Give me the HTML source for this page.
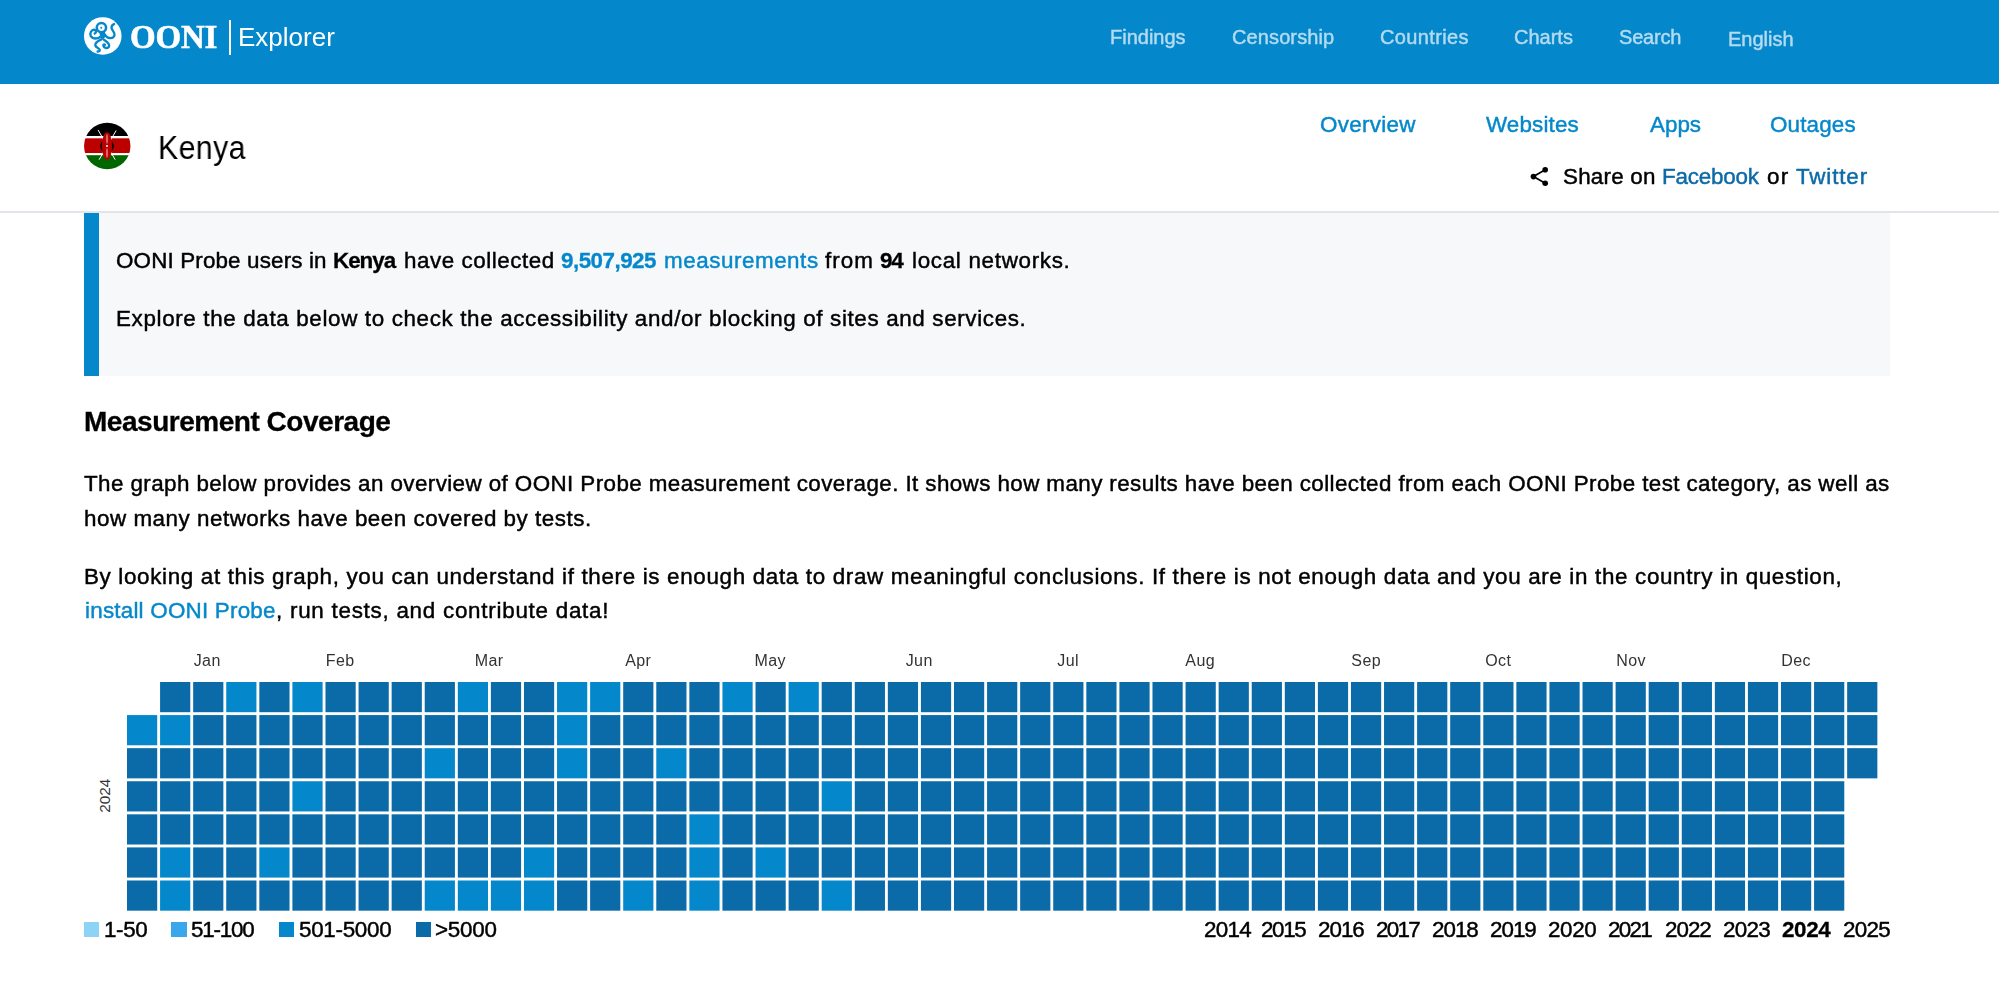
<!DOCTYPE html>
<html><head><meta charset="utf-8"><title>Kenya - OONI Explorer</title>
<style>
html,body{margin:0;padding:0;background:#fff;width:1999px;height:995px;overflow:hidden;position:relative;font-family:"Liberation Sans", sans-serif}
.t{position:absolute;white-space:pre;will-change:transform}
.lk{color:#0588cb}
.lk2{color:#0b6ba8}
.ml{position:absolute;top:653px;width:100px;text-align:center;font-size:16px;line-height:16px;letter-spacing:0.4px;text-indent:0.4px;color:#333;will-change:transform}
</style></head><body>
<div style="position:absolute;left:0;top:0;width:1999px;height:84px;background:#0588cb"></div>
<svg style="position:absolute;left:82px;top:15px" width="42" height="42" viewBox="0 0 995 995">
 <circle cx="492" cy="497" r="445" fill="#fff"/>
 <g fill="none" stroke="#0588cb" stroke-width="56" stroke-linecap="round" stroke-linejoin="round">
  <circle cx="460" cy="298" r="110" stroke-width="60"/>
  <path d="M440 510 C 390 570, 260 580, 210 500 C 170 430, 230 345, 290 350 C 340 355, 350 420, 300 440"/>
  <path d="M545 470 C 600 560, 740 580, 770 480 C 790 410, 700 360, 700 300 C 700 250, 730 225, 760 215"/>
  <path d="M465 575 C 390 610, 300 650, 315 720 C 330 780, 410 770, 420 830 C 425 860, 395 870, 370 865"/>
  <path d="M520 585 C 590 630, 670 690, 640 750 C 610 800, 520 790, 505 730 C 500 700, 530 690, 545 705"/>
 </g>
 <path d="M395 370 Q 460 420 530 370 L 560 470 Q 550 550 490 580 Q 430 550 425 480 Z" fill="#0588cb"/>
 <circle cx="456" cy="304" r="24" fill="#0588cb"/>
</svg>
<div style="position:absolute;left:228.6px;top:20px;width:2.6px;height:34.8px;background:#fff"></div>
<svg style="position:absolute;left:82px;top:121px" width="50" height="50" viewBox="0 0 50 50">
 <defs><clipPath id="fc"><circle cx="25.25" cy="25" r="23.2"/></clipPath></defs>
 <g clip-path="url(#fc)">
  <rect x="0" y="0" width="50" height="15.1" fill="#000"/>
  <rect x="0" y="15.1" width="50" height="2.2" fill="#fff"/>
  <rect x="0" y="17.3" width="50" height="14.9" fill="#bb0000"/>
  <rect x="0" y="32.2" width="50" height="2" fill="#fff"/>
  <rect x="0" y="34.2" width="50" height="16" fill="#006600"/>
  <line x1="16.1" y1="9" x2="33.2" y2="38.7" stroke="#fff" stroke-width="1"/>
  <line x1="34.2" y1="9.5" x2="17.1" y2="38.7" stroke="#fff" stroke-width="1"/>
  <ellipse cx="25" cy="25" rx="6.8" ry="7.2" fill="#000"/>
  <ellipse cx="25" cy="25" rx="5.1" ry="13.8" fill="#bb0000"/>
  <ellipse cx="25" cy="18" rx="1.1" ry="4.8" fill="#fff" opacity=".4"/>
  <ellipse cx="25" cy="32" rx="1.1" ry="4.8" fill="#fff" opacity=".4"/>
  <circle cx="25" cy="25" r="1" fill="#fff"/>
 </g>
</svg>
<svg style="position:absolute;left:1526px;top:163px" width="26" height="26" viewBox="0 0 26 26">
 <g stroke="#000" stroke-width="1.7"><line x1="19.2" y1="6.7" x2="7.45" y2="13.6"/><line x1="7.45" y1="13.6" x2="19.2" y2="20.25"/></g>
 <g fill="#000"><circle cx="19.2" cy="6.7" r="2.8"/><circle cx="7.45" cy="13.6" r="2.8"/><circle cx="19.2" cy="20.25" r="2.8"/></g>
</svg>
<div style="position:absolute;left:0;top:211px;width:1999px;height:2px;background:#e1e4e9"></div>
<div style="position:absolute;left:84px;top:213px;width:1806px;height:163px;background:#f7f8fa"></div>
<div style="position:absolute;left:84px;top:213px;width:14.6px;height:163px;background:#0588cb"></div>
<div id="ooni" class="t" style="left:130.30px;top:21.00px;font-size:33px;line-height:33px;font-weight:700;color:#fff;letter-spacing:-0.200px;font-family:'Liberation Serif', serif;-webkit-text-stroke:0.5px #fff;">OONI</div><div id="explorer" class="t" style="left:237.80px;top:24.00px;font-size:26px;line-height:26px;font-weight:400;color:#fff;letter-spacing:-0.000px;font-family:'Liberation Sans', sans-serif;">Explorer</div><div id="n1" class="t" style="left:1110.30px;top:27.00px;font-size:20px;line-height:20px;font-weight:400;color:#b4dbef;letter-spacing:-0.000px;font-family:'Liberation Sans', sans-serif;-webkit-text-stroke:0.45px #b4dbef;">Findings</div><div id="n2" class="t" style="left:1231.60px;top:27.00px;font-size:20px;line-height:20px;font-weight:400;color:#b4dbef;letter-spacing:0.111px;font-family:'Liberation Sans', sans-serif;-webkit-text-stroke:0.45px #b4dbef;">Censorship</div><div id="n3" class="t" style="left:1379.80px;top:27.00px;font-size:20px;line-height:20px;font-weight:400;color:#b4dbef;letter-spacing:0.375px;font-family:'Liberation Sans', sans-serif;-webkit-text-stroke:0.45px #b4dbef;">Countries</div><div id="n4" class="t" style="left:1514.40px;top:27.00px;font-size:20px;line-height:20px;font-weight:400;color:#b4dbef;letter-spacing:-0.000px;font-family:'Liberation Sans', sans-serif;-webkit-text-stroke:0.45px #b4dbef;">Charts</div><div id="n5" class="t" style="left:1618.50px;top:27.00px;font-size:20px;line-height:20px;font-weight:400;color:#b4dbef;letter-spacing:-0.200px;font-family:'Liberation Sans', sans-serif;-webkit-text-stroke:0.45px #b4dbef;">Search</div><div id="n6" class="t" style="left:1727.70px;top:29.00px;font-size:20px;line-height:20px;font-weight:400;color:#b4dbef;letter-spacing:0.000px;font-family:'Liberation Sans', sans-serif;-webkit-text-stroke:0.45px #b4dbef;">English</div><div id="kenya" class="t" style="left:157.60px;top:131.00px;font-size:33.6px;line-height:33.6px;font-weight:400;color:#000;letter-spacing:0.500px;font-family:'Liberation Sans', sans-serif;transform:scaleX(0.9);transform-origin:0 0;">Kenya</div><div id="t1" class="t" style="left:1320.30px;top:114.00px;font-size:22.4px;line-height:22.4px;font-weight:400;color:#0588cb;letter-spacing:0.286px;font-family:'Liberation Sans', sans-serif;-webkit-text-stroke:0.45px #0588cb;">Overview</div><div id="t2" class="t" style="left:1486.30px;top:114.00px;font-size:22.4px;line-height:22.4px;font-weight:400;color:#0588cb;letter-spacing:0.143px;font-family:'Liberation Sans', sans-serif;-webkit-text-stroke:0.45px #0588cb;">Websites</div><div id="t3" class="t" style="left:1650.00px;top:114.00px;font-size:22.4px;line-height:22.4px;font-weight:400;color:#0588cb;letter-spacing:0.000px;font-family:'Liberation Sans', sans-serif;-webkit-text-stroke:0.45px #0588cb;">Apps</div><div id="t4" class="t" style="left:1770.20px;top:114.00px;font-size:22.4px;line-height:22.4px;font-weight:400;color:#0588cb;letter-spacing:0.167px;font-family:'Liberation Sans', sans-serif;-webkit-text-stroke:0.45px #0588cb;">Outages</div><div id="sh1" class="t" style="left:1562.60px;top:166.00px;font-size:22.4px;line-height:22.4px;font-weight:400;color:#000;letter-spacing:0.214px;font-family:'Liberation Sans', sans-serif;-webkit-text-stroke:0.45px #000;">Share on</div><div id="sh2" class="t" style="left:1662.40px;top:166.00px;font-size:22.4px;line-height:22.4px;font-weight:400;color:#0b6ba8;letter-spacing:-0.200px;font-family:'Liberation Sans', sans-serif;-webkit-text-stroke:0.45px #0b6ba8;">Facebook</div><div id="sh3" class="t" style="left:1767.00px;top:166.00px;font-size:22.4px;line-height:22.4px;font-weight:400;color:#000;letter-spacing:1.400px;font-family:'Liberation Sans', sans-serif;-webkit-text-stroke:0.45px #000;">or</div><div id="sh4" class="t" style="left:1795.50px;top:166.00px;font-size:22.4px;line-height:22.4px;font-weight:400;color:#0b6ba8;letter-spacing:0.867px;font-family:'Liberation Sans', sans-serif;-webkit-text-stroke:0.45px #0b6ba8;">Twitter</div><div id="c1a" class="t" style="left:115.50px;top:250.00px;font-size:22.4px;line-height:22.4px;font-weight:400;color:#000;letter-spacing:0.153px;font-family:'Liberation Sans', sans-serif;-webkit-text-stroke:0.45px #000;">OONI Probe users in</div><div id="c1b" class="t" style="left:333.40px;top:250.00px;font-size:22.4px;line-height:22.4px;font-weight:700;color:#000;letter-spacing:-1.025px;font-family:'Liberation Sans', sans-serif;-webkit-text-stroke:0.3px #000;">Kenya</div><div id="c1c" class="t" style="left:403.80px;top:250.00px;font-size:22.4px;line-height:22.4px;font-weight:400;color:#000;letter-spacing:0.546px;font-family:'Liberation Sans', sans-serif;-webkit-text-stroke:0.45px #000;">have collected</div><div id="c1d" class="t" style="left:561.20px;top:250.00px;font-size:22.4px;line-height:22.4px;font-weight:700;color:#0588cb;letter-spacing:-0.512px;font-family:'Liberation Sans', sans-serif;-webkit-text-stroke:0.3px #0588cb;">9,507,925</div><div id="c1e" class="t" style="left:663.60px;top:250.00px;font-size:22.4px;line-height:22.4px;font-weight:400;color:#0588cb;letter-spacing:0.545px;font-family:'Liberation Sans', sans-serif;-webkit-text-stroke:0.45px #0588cb;">measurements</div><div id="c1f" class="t" style="left:825.20px;top:250.00px;font-size:22.4px;line-height:22.4px;font-weight:400;color:#000;letter-spacing:1.033px;font-family:'Liberation Sans', sans-serif;-webkit-text-stroke:0.45px #000;">from</div><div id="c1g" class="t" style="left:880.00px;top:250.00px;font-size:22.4px;line-height:22.4px;font-weight:700;color:#000;letter-spacing:-1.300px;font-family:'Liberation Sans', sans-serif;-webkit-text-stroke:0.3px #000;">94</div><div id="c1h" class="t" style="left:912.00px;top:250.00px;font-size:22.4px;line-height:22.4px;font-weight:400;color:#000;letter-spacing:0.693px;font-family:'Liberation Sans', sans-serif;-webkit-text-stroke:0.45px #000;">local networks.</div><div id="c2" class="t" style="left:115.50px;top:308.00px;font-size:22.4px;line-height:22.4px;font-weight:400;color:#000;letter-spacing:0.644px;font-family:'Liberation Sans', sans-serif;-webkit-text-stroke:0.45px #000;">Explore the data below to check the accessibility and/or blocking of sites and services.</div><div id="h" class="t" style="left:83.60px;top:408.00px;font-size:28px;line-height:28px;font-weight:700;color:#000;letter-spacing:-0.474px;font-family:'Liberation Sans', sans-serif;-webkit-text-stroke:0.3px #000;">Measurement Coverage</div><div id="p1" class="t" style="left:84.30px;top:473.00px;font-size:22.4px;line-height:22.4px;font-weight:400;color:#000;letter-spacing:0.409px;font-family:'Liberation Sans', sans-serif;-webkit-text-stroke:0.45px #000;">The graph below provides an overview of OONI Probe measurement coverage. It shows how many results have been collected from each OONI Probe test category, as well as</div><div id="p2" class="t" style="left:84.00px;top:508.00px;font-size:22.4px;line-height:22.4px;font-weight:400;color:#000;letter-spacing:0.523px;font-family:'Liberation Sans', sans-serif;-webkit-text-stroke:0.45px #000;">how many networks have been covered by tests.</div><div id="p3" class="t" style="left:84.30px;top:566.00px;font-size:22.4px;line-height:22.4px;font-weight:400;color:#000;letter-spacing:0.665px;font-family:'Liberation Sans', sans-serif;-webkit-text-stroke:0.45px #000;">By looking at this graph, you can understand if there is enough data to draw meaningful conclusions. If there is not enough data and you are in the country in question,</div><div id="p4a" class="t" style="left:84.50px;top:600.00px;font-size:22.4px;line-height:22.4px;font-weight:400;color:#0588cb;letter-spacing:0.224px;font-family:'Liberation Sans', sans-serif;-webkit-text-stroke:0.45px #0588cb;">install OONI Probe</div><div id="p4b" class="t" style="left:275.50px;top:600.00px;font-size:22.4px;line-height:22.4px;font-weight:400;color:#000;letter-spacing:0.744px;font-family:'Liberation Sans', sans-serif;-webkit-text-stroke:0.45px #000;">, run tests, and contribute data!</div><div id="l1" class="t" style="left:103.60px;top:919.00px;font-size:22.4px;line-height:22.4px;font-weight:400;color:#000;letter-spacing:-0.333px;font-family:'Liberation Sans', sans-serif;-webkit-text-stroke:0.45px #000;">1-50</div><div id="l2" class="t" style="left:191.20px;top:919.00px;font-size:22.4px;line-height:22.4px;font-weight:400;color:#000;letter-spacing:-1.200px;font-family:'Liberation Sans', sans-serif;-webkit-text-stroke:0.45px #000;">51-100</div><div id="l3" class="t" style="left:299.00px;top:919.00px;font-size:22.4px;line-height:22.4px;font-weight:400;color:#000;letter-spacing:-0.286px;font-family:'Liberation Sans', sans-serif;-webkit-text-stroke:0.45px #000;">501-5000</div><div id="l4" class="t" style="left:435.00px;top:919.00px;font-size:22.4px;line-height:22.4px;font-weight:400;color:#000;letter-spacing:-0.250px;font-family:'Liberation Sans', sans-serif;-webkit-text-stroke:0.45px #000;">&gt;5000</div><div id="y2014" class="t" style="left:1203.60px;top:919.00px;font-size:22.4px;line-height:22.4px;font-weight:400;color:#000;letter-spacing:-0.667px;font-family:'Liberation Sans', sans-serif;-webkit-text-stroke:0.45px #000;">2014</div><div id="y2015" class="t" style="left:1261.40px;top:919.00px;font-size:22.4px;line-height:22.4px;font-weight:400;color:#000;letter-spacing:-1.333px;font-family:'Liberation Sans', sans-serif;-webkit-text-stroke:0.45px #000;">2015</div><div id="y2016" class="t" style="left:1318.30px;top:919.00px;font-size:22.4px;line-height:22.4px;font-weight:400;color:#000;letter-spacing:-1.000px;font-family:'Liberation Sans', sans-serif;-webkit-text-stroke:0.45px #000;">2016</div><div id="y2017" class="t" style="left:1376.10px;top:919.00px;font-size:22.4px;line-height:22.4px;font-weight:400;color:#000;letter-spacing:-1.667px;font-family:'Liberation Sans', sans-serif;-webkit-text-stroke:0.45px #000;">2017</div><div id="y2018" class="t" style="left:1432.10px;top:919.00px;font-size:22.4px;line-height:22.4px;font-weight:400;color:#000;letter-spacing:-1.000px;font-family:'Liberation Sans', sans-serif;-webkit-text-stroke:0.45px #000;">2018</div><div id="y2019" class="t" style="left:1489.90px;top:919.00px;font-size:22.4px;line-height:22.4px;font-weight:400;color:#000;letter-spacing:-1.000px;font-family:'Liberation Sans', sans-serif;-webkit-text-stroke:0.45px #000;">2019</div><div id="y2020" class="t" style="left:1547.50px;top:919.00px;font-size:22.4px;line-height:22.4px;font-weight:400;color:#000;letter-spacing:-0.333px;font-family:'Liberation Sans', sans-serif;-webkit-text-stroke:0.45px #000;">2020</div><div id="y2021" class="t" style="left:1607.90px;top:919.00px;font-size:22.4px;line-height:22.4px;font-weight:400;color:#000;letter-spacing:-1.667px;font-family:'Liberation Sans', sans-serif;-webkit-text-stroke:0.45px #000;">2021</div><div id="y2022" class="t" style="left:1664.50px;top:919.00px;font-size:22.4px;line-height:22.4px;font-weight:400;color:#000;letter-spacing:-1.000px;font-family:'Liberation Sans', sans-serif;-webkit-text-stroke:0.45px #000;">2022</div><div id="y2023" class="t" style="left:1723.00px;top:919.00px;font-size:22.4px;line-height:22.4px;font-weight:400;color:#000;letter-spacing:-0.667px;font-family:'Liberation Sans', sans-serif;-webkit-text-stroke:0.45px #000;">2023</div><div id="y2024" class="t" style="left:1782.30px;top:919.00px;font-size:22.4px;line-height:22.4px;font-weight:700;color:#000;letter-spacing:-0.333px;font-family:'Liberation Sans', sans-serif;-webkit-text-stroke:0.3px #000;">2024</div><div id="y2025" class="t" style="left:1842.50px;top:919.00px;font-size:22.4px;line-height:22.4px;font-weight:400;color:#000;letter-spacing:-0.667px;font-family:'Liberation Sans', sans-serif;-webkit-text-stroke:0.45px #000;">2025</div>
<div class="ml" style="left:157.3px">Jan</div><div class="ml" style="left:290.0px">Feb</div><div class="ml" style="left:439.0px">Mar</div><div class="ml" style="left:587.8px">Apr</div><div class="ml" style="left:720.0px">May</div><div class="ml" style="left:868.8px">Jun</div><div class="ml" style="left:1017.7px">Jul</div><div class="ml" style="left:1150.3px">Aug</div><div class="ml" style="left:1315.5px">Sep</div><div class="ml" style="left:1448.0px">Oct</div><div class="ml" style="left:1580.5px">Nov</div><div class="ml" style="left:1745.8px">Dec</div>
<svg style="position:absolute;left:126.8px;top:681.5px;overflow:visible" width="1760" height="232" shape-rendering="auto"><rect x="0.00" y="33.08" width="30.2" height="30.2" fill="#0588cb"/><rect x="0.00" y="66.16" width="30.2" height="30.2" fill="#0a6ba8"/><rect x="0.00" y="99.24" width="30.2" height="30.2" fill="#0a6ba8"/><rect x="0.00" y="132.32" width="30.2" height="30.2" fill="#0a6ba8"/><rect x="0.00" y="165.40" width="30.2" height="30.2" fill="#0a6ba8"/><rect x="0.00" y="198.48" width="30.2" height="30.2" fill="#0a6ba8"/><rect x="33.08" y="0.00" width="30.2" height="30.2" fill="#0a6ba8"/><rect x="33.08" y="33.08" width="30.2" height="30.2" fill="#0588cb"/><rect x="33.08" y="66.16" width="30.2" height="30.2" fill="#0a6ba8"/><rect x="33.08" y="99.24" width="30.2" height="30.2" fill="#0a6ba8"/><rect x="33.08" y="132.32" width="30.2" height="30.2" fill="#0a6ba8"/><rect x="33.08" y="165.40" width="30.2" height="30.2" fill="#0588cb"/><rect x="33.08" y="198.48" width="30.2" height="30.2" fill="#0588cb"/><rect x="66.16" y="0.00" width="30.2" height="30.2" fill="#0a6ba8"/><rect x="66.16" y="33.08" width="30.2" height="30.2" fill="#0a6ba8"/><rect x="66.16" y="66.16" width="30.2" height="30.2" fill="#0a6ba8"/><rect x="66.16" y="99.24" width="30.2" height="30.2" fill="#0a6ba8"/><rect x="66.16" y="132.32" width="30.2" height="30.2" fill="#0a6ba8"/><rect x="66.16" y="165.40" width="30.2" height="30.2" fill="#0a6ba8"/><rect x="66.16" y="198.48" width="30.2" height="30.2" fill="#0a6ba8"/><rect x="99.24" y="0.00" width="30.2" height="30.2" fill="#0588cb"/><rect x="99.24" y="33.08" width="30.2" height="30.2" fill="#0a6ba8"/><rect x="99.24" y="66.16" width="30.2" height="30.2" fill="#0a6ba8"/><rect x="99.24" y="99.24" width="30.2" height="30.2" fill="#0a6ba8"/><rect x="99.24" y="132.32" width="30.2" height="30.2" fill="#0a6ba8"/><rect x="99.24" y="165.40" width="30.2" height="30.2" fill="#0a6ba8"/><rect x="99.24" y="198.48" width="30.2" height="30.2" fill="#0a6ba8"/><rect x="132.32" y="0.00" width="30.2" height="30.2" fill="#0a6ba8"/><rect x="132.32" y="33.08" width="30.2" height="30.2" fill="#0a6ba8"/><rect x="132.32" y="66.16" width="30.2" height="30.2" fill="#0a6ba8"/><rect x="132.32" y="99.24" width="30.2" height="30.2" fill="#0a6ba8"/><rect x="132.32" y="132.32" width="30.2" height="30.2" fill="#0a6ba8"/><rect x="132.32" y="165.40" width="30.2" height="30.2" fill="#0588cb"/><rect x="132.32" y="198.48" width="30.2" height="30.2" fill="#0a6ba8"/><rect x="165.40" y="0.00" width="30.2" height="30.2" fill="#0588cb"/><rect x="165.40" y="33.08" width="30.2" height="30.2" fill="#0a6ba8"/><rect x="165.40" y="66.16" width="30.2" height="30.2" fill="#0a6ba8"/><rect x="165.40" y="99.24" width="30.2" height="30.2" fill="#0588cb"/><rect x="165.40" y="132.32" width="30.2" height="30.2" fill="#0a6ba8"/><rect x="165.40" y="165.40" width="30.2" height="30.2" fill="#0a6ba8"/><rect x="165.40" y="198.48" width="30.2" height="30.2" fill="#0a6ba8"/><rect x="198.48" y="0.00" width="30.2" height="30.2" fill="#0a6ba8"/><rect x="198.48" y="33.08" width="30.2" height="30.2" fill="#0a6ba8"/><rect x="198.48" y="66.16" width="30.2" height="30.2" fill="#0a6ba8"/><rect x="198.48" y="99.24" width="30.2" height="30.2" fill="#0a6ba8"/><rect x="198.48" y="132.32" width="30.2" height="30.2" fill="#0a6ba8"/><rect x="198.48" y="165.40" width="30.2" height="30.2" fill="#0a6ba8"/><rect x="198.48" y="198.48" width="30.2" height="30.2" fill="#0a6ba8"/><rect x="231.56" y="0.00" width="30.2" height="30.2" fill="#0a6ba8"/><rect x="231.56" y="33.08" width="30.2" height="30.2" fill="#0a6ba8"/><rect x="231.56" y="66.16" width="30.2" height="30.2" fill="#0a6ba8"/><rect x="231.56" y="99.24" width="30.2" height="30.2" fill="#0a6ba8"/><rect x="231.56" y="132.32" width="30.2" height="30.2" fill="#0a6ba8"/><rect x="231.56" y="165.40" width="30.2" height="30.2" fill="#0a6ba8"/><rect x="231.56" y="198.48" width="30.2" height="30.2" fill="#0a6ba8"/><rect x="264.64" y="0.00" width="30.2" height="30.2" fill="#0a6ba8"/><rect x="264.64" y="33.08" width="30.2" height="30.2" fill="#0a6ba8"/><rect x="264.64" y="66.16" width="30.2" height="30.2" fill="#0a6ba8"/><rect x="264.64" y="99.24" width="30.2" height="30.2" fill="#0a6ba8"/><rect x="264.64" y="132.32" width="30.2" height="30.2" fill="#0a6ba8"/><rect x="264.64" y="165.40" width="30.2" height="30.2" fill="#0a6ba8"/><rect x="264.64" y="198.48" width="30.2" height="30.2" fill="#0a6ba8"/><rect x="297.72" y="0.00" width="30.2" height="30.2" fill="#0a6ba8"/><rect x="297.72" y="33.08" width="30.2" height="30.2" fill="#0a6ba8"/><rect x="297.72" y="66.16" width="30.2" height="30.2" fill="#0588cb"/><rect x="297.72" y="99.24" width="30.2" height="30.2" fill="#0a6ba8"/><rect x="297.72" y="132.32" width="30.2" height="30.2" fill="#0a6ba8"/><rect x="297.72" y="165.40" width="30.2" height="30.2" fill="#0a6ba8"/><rect x="297.72" y="198.48" width="30.2" height="30.2" fill="#0588cb"/><rect x="330.80" y="0.00" width="30.2" height="30.2" fill="#0588cb"/><rect x="330.80" y="33.08" width="30.2" height="30.2" fill="#0a6ba8"/><rect x="330.80" y="66.16" width="30.2" height="30.2" fill="#0a6ba8"/><rect x="330.80" y="99.24" width="30.2" height="30.2" fill="#0a6ba8"/><rect x="330.80" y="132.32" width="30.2" height="30.2" fill="#0a6ba8"/><rect x="330.80" y="165.40" width="30.2" height="30.2" fill="#0a6ba8"/><rect x="330.80" y="198.48" width="30.2" height="30.2" fill="#0588cb"/><rect x="363.88" y="0.00" width="30.2" height="30.2" fill="#0a6ba8"/><rect x="363.88" y="33.08" width="30.2" height="30.2" fill="#0a6ba8"/><rect x="363.88" y="66.16" width="30.2" height="30.2" fill="#0a6ba8"/><rect x="363.88" y="99.24" width="30.2" height="30.2" fill="#0a6ba8"/><rect x="363.88" y="132.32" width="30.2" height="30.2" fill="#0a6ba8"/><rect x="363.88" y="165.40" width="30.2" height="30.2" fill="#0a6ba8"/><rect x="363.88" y="198.48" width="30.2" height="30.2" fill="#0588cb"/><rect x="396.96" y="0.00" width="30.2" height="30.2" fill="#0a6ba8"/><rect x="396.96" y="33.08" width="30.2" height="30.2" fill="#0a6ba8"/><rect x="396.96" y="66.16" width="30.2" height="30.2" fill="#0a6ba8"/><rect x="396.96" y="99.24" width="30.2" height="30.2" fill="#0a6ba8"/><rect x="396.96" y="132.32" width="30.2" height="30.2" fill="#0a6ba8"/><rect x="396.96" y="165.40" width="30.2" height="30.2" fill="#0588cb"/><rect x="396.96" y="198.48" width="30.2" height="30.2" fill="#0588cb"/><rect x="430.04" y="0.00" width="30.2" height="30.2" fill="#0588cb"/><rect x="430.04" y="33.08" width="30.2" height="30.2" fill="#0588cb"/><rect x="430.04" y="66.16" width="30.2" height="30.2" fill="#0588cb"/><rect x="430.04" y="99.24" width="30.2" height="30.2" fill="#0a6ba8"/><rect x="430.04" y="132.32" width="30.2" height="30.2" fill="#0a6ba8"/><rect x="430.04" y="165.40" width="30.2" height="30.2" fill="#0a6ba8"/><rect x="430.04" y="198.48" width="30.2" height="30.2" fill="#0a6ba8"/><rect x="463.12" y="0.00" width="30.2" height="30.2" fill="#0588cb"/><rect x="463.12" y="33.08" width="30.2" height="30.2" fill="#0a6ba8"/><rect x="463.12" y="66.16" width="30.2" height="30.2" fill="#0a6ba8"/><rect x="463.12" y="99.24" width="30.2" height="30.2" fill="#0a6ba8"/><rect x="463.12" y="132.32" width="30.2" height="30.2" fill="#0a6ba8"/><rect x="463.12" y="165.40" width="30.2" height="30.2" fill="#0a6ba8"/><rect x="463.12" y="198.48" width="30.2" height="30.2" fill="#0a6ba8"/><rect x="496.20" y="0.00" width="30.2" height="30.2" fill="#0a6ba8"/><rect x="496.20" y="33.08" width="30.2" height="30.2" fill="#0a6ba8"/><rect x="496.20" y="66.16" width="30.2" height="30.2" fill="#0a6ba8"/><rect x="496.20" y="99.24" width="30.2" height="30.2" fill="#0a6ba8"/><rect x="496.20" y="132.32" width="30.2" height="30.2" fill="#0a6ba8"/><rect x="496.20" y="165.40" width="30.2" height="30.2" fill="#0a6ba8"/><rect x="496.20" y="198.48" width="30.2" height="30.2" fill="#0588cb"/><rect x="529.28" y="0.00" width="30.2" height="30.2" fill="#0a6ba8"/><rect x="529.28" y="33.08" width="30.2" height="30.2" fill="#0a6ba8"/><rect x="529.28" y="66.16" width="30.2" height="30.2" fill="#0588cb"/><rect x="529.28" y="99.24" width="30.2" height="30.2" fill="#0a6ba8"/><rect x="529.28" y="132.32" width="30.2" height="30.2" fill="#0a6ba8"/><rect x="529.28" y="165.40" width="30.2" height="30.2" fill="#0a6ba8"/><rect x="529.28" y="198.48" width="30.2" height="30.2" fill="#0a6ba8"/><rect x="562.36" y="0.00" width="30.2" height="30.2" fill="#0a6ba8"/><rect x="562.36" y="33.08" width="30.2" height="30.2" fill="#0a6ba8"/><rect x="562.36" y="66.16" width="30.2" height="30.2" fill="#0a6ba8"/><rect x="562.36" y="99.24" width="30.2" height="30.2" fill="#0a6ba8"/><rect x="562.36" y="132.32" width="30.2" height="30.2" fill="#0588cb"/><rect x="562.36" y="165.40" width="30.2" height="30.2" fill="#0588cb"/><rect x="562.36" y="198.48" width="30.2" height="30.2" fill="#0588cb"/><rect x="595.44" y="0.00" width="30.2" height="30.2" fill="#0588cb"/><rect x="595.44" y="33.08" width="30.2" height="30.2" fill="#0a6ba8"/><rect x="595.44" y="66.16" width="30.2" height="30.2" fill="#0a6ba8"/><rect x="595.44" y="99.24" width="30.2" height="30.2" fill="#0a6ba8"/><rect x="595.44" y="132.32" width="30.2" height="30.2" fill="#0a6ba8"/><rect x="595.44" y="165.40" width="30.2" height="30.2" fill="#0a6ba8"/><rect x="595.44" y="198.48" width="30.2" height="30.2" fill="#0a6ba8"/><rect x="628.52" y="0.00" width="30.2" height="30.2" fill="#0a6ba8"/><rect x="628.52" y="33.08" width="30.2" height="30.2" fill="#0a6ba8"/><rect x="628.52" y="66.16" width="30.2" height="30.2" fill="#0a6ba8"/><rect x="628.52" y="99.24" width="30.2" height="30.2" fill="#0a6ba8"/><rect x="628.52" y="132.32" width="30.2" height="30.2" fill="#0a6ba8"/><rect x="628.52" y="165.40" width="30.2" height="30.2" fill="#0588cb"/><rect x="628.52" y="198.48" width="30.2" height="30.2" fill="#0a6ba8"/><rect x="661.60" y="0.00" width="30.2" height="30.2" fill="#0588cb"/><rect x="661.60" y="33.08" width="30.2" height="30.2" fill="#0a6ba8"/><rect x="661.60" y="66.16" width="30.2" height="30.2" fill="#0a6ba8"/><rect x="661.60" y="99.24" width="30.2" height="30.2" fill="#0a6ba8"/><rect x="661.60" y="132.32" width="30.2" height="30.2" fill="#0a6ba8"/><rect x="661.60" y="165.40" width="30.2" height="30.2" fill="#0a6ba8"/><rect x="661.60" y="198.48" width="30.2" height="30.2" fill="#0a6ba8"/><rect x="694.68" y="0.00" width="30.2" height="30.2" fill="#0a6ba8"/><rect x="694.68" y="33.08" width="30.2" height="30.2" fill="#0a6ba8"/><rect x="694.68" y="66.16" width="30.2" height="30.2" fill="#0a6ba8"/><rect x="694.68" y="99.24" width="30.2" height="30.2" fill="#0588cb"/><rect x="694.68" y="132.32" width="30.2" height="30.2" fill="#0a6ba8"/><rect x="694.68" y="165.40" width="30.2" height="30.2" fill="#0a6ba8"/><rect x="694.68" y="198.48" width="30.2" height="30.2" fill="#0588cb"/><rect x="727.76" y="0.00" width="30.2" height="30.2" fill="#0a6ba8"/><rect x="727.76" y="33.08" width="30.2" height="30.2" fill="#0a6ba8"/><rect x="727.76" y="66.16" width="30.2" height="30.2" fill="#0a6ba8"/><rect x="727.76" y="99.24" width="30.2" height="30.2" fill="#0a6ba8"/><rect x="727.76" y="132.32" width="30.2" height="30.2" fill="#0a6ba8"/><rect x="727.76" y="165.40" width="30.2" height="30.2" fill="#0a6ba8"/><rect x="727.76" y="198.48" width="30.2" height="30.2" fill="#0a6ba8"/><rect x="760.84" y="0.00" width="30.2" height="30.2" fill="#0a6ba8"/><rect x="760.84" y="33.08" width="30.2" height="30.2" fill="#0a6ba8"/><rect x="760.84" y="66.16" width="30.2" height="30.2" fill="#0a6ba8"/><rect x="760.84" y="99.24" width="30.2" height="30.2" fill="#0a6ba8"/><rect x="760.84" y="132.32" width="30.2" height="30.2" fill="#0a6ba8"/><rect x="760.84" y="165.40" width="30.2" height="30.2" fill="#0a6ba8"/><rect x="760.84" y="198.48" width="30.2" height="30.2" fill="#0a6ba8"/><rect x="793.92" y="0.00" width="30.2" height="30.2" fill="#0a6ba8"/><rect x="793.92" y="33.08" width="30.2" height="30.2" fill="#0a6ba8"/><rect x="793.92" y="66.16" width="30.2" height="30.2" fill="#0a6ba8"/><rect x="793.92" y="99.24" width="30.2" height="30.2" fill="#0a6ba8"/><rect x="793.92" y="132.32" width="30.2" height="30.2" fill="#0a6ba8"/><rect x="793.92" y="165.40" width="30.2" height="30.2" fill="#0a6ba8"/><rect x="793.92" y="198.48" width="30.2" height="30.2" fill="#0a6ba8"/><rect x="827.00" y="0.00" width="30.2" height="30.2" fill="#0a6ba8"/><rect x="827.00" y="33.08" width="30.2" height="30.2" fill="#0a6ba8"/><rect x="827.00" y="66.16" width="30.2" height="30.2" fill="#0a6ba8"/><rect x="827.00" y="99.24" width="30.2" height="30.2" fill="#0a6ba8"/><rect x="827.00" y="132.32" width="30.2" height="30.2" fill="#0a6ba8"/><rect x="827.00" y="165.40" width="30.2" height="30.2" fill="#0a6ba8"/><rect x="827.00" y="198.48" width="30.2" height="30.2" fill="#0a6ba8"/><rect x="860.08" y="0.00" width="30.2" height="30.2" fill="#0a6ba8"/><rect x="860.08" y="33.08" width="30.2" height="30.2" fill="#0a6ba8"/><rect x="860.08" y="66.16" width="30.2" height="30.2" fill="#0a6ba8"/><rect x="860.08" y="99.24" width="30.2" height="30.2" fill="#0a6ba8"/><rect x="860.08" y="132.32" width="30.2" height="30.2" fill="#0a6ba8"/><rect x="860.08" y="165.40" width="30.2" height="30.2" fill="#0a6ba8"/><rect x="860.08" y="198.48" width="30.2" height="30.2" fill="#0a6ba8"/><rect x="893.16" y="0.00" width="30.2" height="30.2" fill="#0a6ba8"/><rect x="893.16" y="33.08" width="30.2" height="30.2" fill="#0a6ba8"/><rect x="893.16" y="66.16" width="30.2" height="30.2" fill="#0a6ba8"/><rect x="893.16" y="99.24" width="30.2" height="30.2" fill="#0a6ba8"/><rect x="893.16" y="132.32" width="30.2" height="30.2" fill="#0a6ba8"/><rect x="893.16" y="165.40" width="30.2" height="30.2" fill="#0a6ba8"/><rect x="893.16" y="198.48" width="30.2" height="30.2" fill="#0a6ba8"/><rect x="926.24" y="0.00" width="30.2" height="30.2" fill="#0a6ba8"/><rect x="926.24" y="33.08" width="30.2" height="30.2" fill="#0a6ba8"/><rect x="926.24" y="66.16" width="30.2" height="30.2" fill="#0a6ba8"/><rect x="926.24" y="99.24" width="30.2" height="30.2" fill="#0a6ba8"/><rect x="926.24" y="132.32" width="30.2" height="30.2" fill="#0a6ba8"/><rect x="926.24" y="165.40" width="30.2" height="30.2" fill="#0a6ba8"/><rect x="926.24" y="198.48" width="30.2" height="30.2" fill="#0a6ba8"/><rect x="959.32" y="0.00" width="30.2" height="30.2" fill="#0a6ba8"/><rect x="959.32" y="33.08" width="30.2" height="30.2" fill="#0a6ba8"/><rect x="959.32" y="66.16" width="30.2" height="30.2" fill="#0a6ba8"/><rect x="959.32" y="99.24" width="30.2" height="30.2" fill="#0a6ba8"/><rect x="959.32" y="132.32" width="30.2" height="30.2" fill="#0a6ba8"/><rect x="959.32" y="165.40" width="30.2" height="30.2" fill="#0a6ba8"/><rect x="959.32" y="198.48" width="30.2" height="30.2" fill="#0a6ba8"/><rect x="992.40" y="0.00" width="30.2" height="30.2" fill="#0a6ba8"/><rect x="992.40" y="33.08" width="30.2" height="30.2" fill="#0a6ba8"/><rect x="992.40" y="66.16" width="30.2" height="30.2" fill="#0a6ba8"/><rect x="992.40" y="99.24" width="30.2" height="30.2" fill="#0a6ba8"/><rect x="992.40" y="132.32" width="30.2" height="30.2" fill="#0a6ba8"/><rect x="992.40" y="165.40" width="30.2" height="30.2" fill="#0a6ba8"/><rect x="992.40" y="198.48" width="30.2" height="30.2" fill="#0a6ba8"/><rect x="1025.48" y="0.00" width="30.2" height="30.2" fill="#0a6ba8"/><rect x="1025.48" y="33.08" width="30.2" height="30.2" fill="#0a6ba8"/><rect x="1025.48" y="66.16" width="30.2" height="30.2" fill="#0a6ba8"/><rect x="1025.48" y="99.24" width="30.2" height="30.2" fill="#0a6ba8"/><rect x="1025.48" y="132.32" width="30.2" height="30.2" fill="#0a6ba8"/><rect x="1025.48" y="165.40" width="30.2" height="30.2" fill="#0a6ba8"/><rect x="1025.48" y="198.48" width="30.2" height="30.2" fill="#0a6ba8"/><rect x="1058.56" y="0.00" width="30.2" height="30.2" fill="#0a6ba8"/><rect x="1058.56" y="33.08" width="30.2" height="30.2" fill="#0a6ba8"/><rect x="1058.56" y="66.16" width="30.2" height="30.2" fill="#0a6ba8"/><rect x="1058.56" y="99.24" width="30.2" height="30.2" fill="#0a6ba8"/><rect x="1058.56" y="132.32" width="30.2" height="30.2" fill="#0a6ba8"/><rect x="1058.56" y="165.40" width="30.2" height="30.2" fill="#0a6ba8"/><rect x="1058.56" y="198.48" width="30.2" height="30.2" fill="#0a6ba8"/><rect x="1091.64" y="0.00" width="30.2" height="30.2" fill="#0a6ba8"/><rect x="1091.64" y="33.08" width="30.2" height="30.2" fill="#0a6ba8"/><rect x="1091.64" y="66.16" width="30.2" height="30.2" fill="#0a6ba8"/><rect x="1091.64" y="99.24" width="30.2" height="30.2" fill="#0a6ba8"/><rect x="1091.64" y="132.32" width="30.2" height="30.2" fill="#0a6ba8"/><rect x="1091.64" y="165.40" width="30.2" height="30.2" fill="#0a6ba8"/><rect x="1091.64" y="198.48" width="30.2" height="30.2" fill="#0a6ba8"/><rect x="1124.72" y="0.00" width="30.2" height="30.2" fill="#0a6ba8"/><rect x="1124.72" y="33.08" width="30.2" height="30.2" fill="#0a6ba8"/><rect x="1124.72" y="66.16" width="30.2" height="30.2" fill="#0a6ba8"/><rect x="1124.72" y="99.24" width="30.2" height="30.2" fill="#0a6ba8"/><rect x="1124.72" y="132.32" width="30.2" height="30.2" fill="#0a6ba8"/><rect x="1124.72" y="165.40" width="30.2" height="30.2" fill="#0a6ba8"/><rect x="1124.72" y="198.48" width="30.2" height="30.2" fill="#0a6ba8"/><rect x="1157.80" y="0.00" width="30.2" height="30.2" fill="#0a6ba8"/><rect x="1157.80" y="33.08" width="30.2" height="30.2" fill="#0a6ba8"/><rect x="1157.80" y="66.16" width="30.2" height="30.2" fill="#0a6ba8"/><rect x="1157.80" y="99.24" width="30.2" height="30.2" fill="#0a6ba8"/><rect x="1157.80" y="132.32" width="30.2" height="30.2" fill="#0a6ba8"/><rect x="1157.80" y="165.40" width="30.2" height="30.2" fill="#0a6ba8"/><rect x="1157.80" y="198.48" width="30.2" height="30.2" fill="#0a6ba8"/><rect x="1190.88" y="0.00" width="30.2" height="30.2" fill="#0a6ba8"/><rect x="1190.88" y="33.08" width="30.2" height="30.2" fill="#0a6ba8"/><rect x="1190.88" y="66.16" width="30.2" height="30.2" fill="#0a6ba8"/><rect x="1190.88" y="99.24" width="30.2" height="30.2" fill="#0a6ba8"/><rect x="1190.88" y="132.32" width="30.2" height="30.2" fill="#0a6ba8"/><rect x="1190.88" y="165.40" width="30.2" height="30.2" fill="#0a6ba8"/><rect x="1190.88" y="198.48" width="30.2" height="30.2" fill="#0a6ba8"/><rect x="1223.96" y="0.00" width="30.2" height="30.2" fill="#0a6ba8"/><rect x="1223.96" y="33.08" width="30.2" height="30.2" fill="#0a6ba8"/><rect x="1223.96" y="66.16" width="30.2" height="30.2" fill="#0a6ba8"/><rect x="1223.96" y="99.24" width="30.2" height="30.2" fill="#0a6ba8"/><rect x="1223.96" y="132.32" width="30.2" height="30.2" fill="#0a6ba8"/><rect x="1223.96" y="165.40" width="30.2" height="30.2" fill="#0a6ba8"/><rect x="1223.96" y="198.48" width="30.2" height="30.2" fill="#0a6ba8"/><rect x="1257.04" y="0.00" width="30.2" height="30.2" fill="#0a6ba8"/><rect x="1257.04" y="33.08" width="30.2" height="30.2" fill="#0a6ba8"/><rect x="1257.04" y="66.16" width="30.2" height="30.2" fill="#0a6ba8"/><rect x="1257.04" y="99.24" width="30.2" height="30.2" fill="#0a6ba8"/><rect x="1257.04" y="132.32" width="30.2" height="30.2" fill="#0a6ba8"/><rect x="1257.04" y="165.40" width="30.2" height="30.2" fill="#0a6ba8"/><rect x="1257.04" y="198.48" width="30.2" height="30.2" fill="#0a6ba8"/><rect x="1290.12" y="0.00" width="30.2" height="30.2" fill="#0a6ba8"/><rect x="1290.12" y="33.08" width="30.2" height="30.2" fill="#0a6ba8"/><rect x="1290.12" y="66.16" width="30.2" height="30.2" fill="#0a6ba8"/><rect x="1290.12" y="99.24" width="30.2" height="30.2" fill="#0a6ba8"/><rect x="1290.12" y="132.32" width="30.2" height="30.2" fill="#0a6ba8"/><rect x="1290.12" y="165.40" width="30.2" height="30.2" fill="#0a6ba8"/><rect x="1290.12" y="198.48" width="30.2" height="30.2" fill="#0a6ba8"/><rect x="1323.20" y="0.00" width="30.2" height="30.2" fill="#0a6ba8"/><rect x="1323.20" y="33.08" width="30.2" height="30.2" fill="#0a6ba8"/><rect x="1323.20" y="66.16" width="30.2" height="30.2" fill="#0a6ba8"/><rect x="1323.20" y="99.24" width="30.2" height="30.2" fill="#0a6ba8"/><rect x="1323.20" y="132.32" width="30.2" height="30.2" fill="#0a6ba8"/><rect x="1323.20" y="165.40" width="30.2" height="30.2" fill="#0a6ba8"/><rect x="1323.20" y="198.48" width="30.2" height="30.2" fill="#0a6ba8"/><rect x="1356.28" y="0.00" width="30.2" height="30.2" fill="#0a6ba8"/><rect x="1356.28" y="33.08" width="30.2" height="30.2" fill="#0a6ba8"/><rect x="1356.28" y="66.16" width="30.2" height="30.2" fill="#0a6ba8"/><rect x="1356.28" y="99.24" width="30.2" height="30.2" fill="#0a6ba8"/><rect x="1356.28" y="132.32" width="30.2" height="30.2" fill="#0a6ba8"/><rect x="1356.28" y="165.40" width="30.2" height="30.2" fill="#0a6ba8"/><rect x="1356.28" y="198.48" width="30.2" height="30.2" fill="#0a6ba8"/><rect x="1389.36" y="0.00" width="30.2" height="30.2" fill="#0a6ba8"/><rect x="1389.36" y="33.08" width="30.2" height="30.2" fill="#0a6ba8"/><rect x="1389.36" y="66.16" width="30.2" height="30.2" fill="#0a6ba8"/><rect x="1389.36" y="99.24" width="30.2" height="30.2" fill="#0a6ba8"/><rect x="1389.36" y="132.32" width="30.2" height="30.2" fill="#0a6ba8"/><rect x="1389.36" y="165.40" width="30.2" height="30.2" fill="#0a6ba8"/><rect x="1389.36" y="198.48" width="30.2" height="30.2" fill="#0a6ba8"/><rect x="1422.44" y="0.00" width="30.2" height="30.2" fill="#0a6ba8"/><rect x="1422.44" y="33.08" width="30.2" height="30.2" fill="#0a6ba8"/><rect x="1422.44" y="66.16" width="30.2" height="30.2" fill="#0a6ba8"/><rect x="1422.44" y="99.24" width="30.2" height="30.2" fill="#0a6ba8"/><rect x="1422.44" y="132.32" width="30.2" height="30.2" fill="#0a6ba8"/><rect x="1422.44" y="165.40" width="30.2" height="30.2" fill="#0a6ba8"/><rect x="1422.44" y="198.48" width="30.2" height="30.2" fill="#0a6ba8"/><rect x="1455.52" y="0.00" width="30.2" height="30.2" fill="#0a6ba8"/><rect x="1455.52" y="33.08" width="30.2" height="30.2" fill="#0a6ba8"/><rect x="1455.52" y="66.16" width="30.2" height="30.2" fill="#0a6ba8"/><rect x="1455.52" y="99.24" width="30.2" height="30.2" fill="#0a6ba8"/><rect x="1455.52" y="132.32" width="30.2" height="30.2" fill="#0a6ba8"/><rect x="1455.52" y="165.40" width="30.2" height="30.2" fill="#0a6ba8"/><rect x="1455.52" y="198.48" width="30.2" height="30.2" fill="#0a6ba8"/><rect x="1488.60" y="0.00" width="30.2" height="30.2" fill="#0a6ba8"/><rect x="1488.60" y="33.08" width="30.2" height="30.2" fill="#0a6ba8"/><rect x="1488.60" y="66.16" width="30.2" height="30.2" fill="#0a6ba8"/><rect x="1488.60" y="99.24" width="30.2" height="30.2" fill="#0a6ba8"/><rect x="1488.60" y="132.32" width="30.2" height="30.2" fill="#0a6ba8"/><rect x="1488.60" y="165.40" width="30.2" height="30.2" fill="#0a6ba8"/><rect x="1488.60" y="198.48" width="30.2" height="30.2" fill="#0a6ba8"/><rect x="1521.68" y="0.00" width="30.2" height="30.2" fill="#0a6ba8"/><rect x="1521.68" y="33.08" width="30.2" height="30.2" fill="#0a6ba8"/><rect x="1521.68" y="66.16" width="30.2" height="30.2" fill="#0a6ba8"/><rect x="1521.68" y="99.24" width="30.2" height="30.2" fill="#0a6ba8"/><rect x="1521.68" y="132.32" width="30.2" height="30.2" fill="#0a6ba8"/><rect x="1521.68" y="165.40" width="30.2" height="30.2" fill="#0a6ba8"/><rect x="1521.68" y="198.48" width="30.2" height="30.2" fill="#0a6ba8"/><rect x="1554.76" y="0.00" width="30.2" height="30.2" fill="#0a6ba8"/><rect x="1554.76" y="33.08" width="30.2" height="30.2" fill="#0a6ba8"/><rect x="1554.76" y="66.16" width="30.2" height="30.2" fill="#0a6ba8"/><rect x="1554.76" y="99.24" width="30.2" height="30.2" fill="#0a6ba8"/><rect x="1554.76" y="132.32" width="30.2" height="30.2" fill="#0a6ba8"/><rect x="1554.76" y="165.40" width="30.2" height="30.2" fill="#0a6ba8"/><rect x="1554.76" y="198.48" width="30.2" height="30.2" fill="#0a6ba8"/><rect x="1587.84" y="0.00" width="30.2" height="30.2" fill="#0a6ba8"/><rect x="1587.84" y="33.08" width="30.2" height="30.2" fill="#0a6ba8"/><rect x="1587.84" y="66.16" width="30.2" height="30.2" fill="#0a6ba8"/><rect x="1587.84" y="99.24" width="30.2" height="30.2" fill="#0a6ba8"/><rect x="1587.84" y="132.32" width="30.2" height="30.2" fill="#0a6ba8"/><rect x="1587.84" y="165.40" width="30.2" height="30.2" fill="#0a6ba8"/><rect x="1587.84" y="198.48" width="30.2" height="30.2" fill="#0a6ba8"/><rect x="1620.92" y="0.00" width="30.2" height="30.2" fill="#0a6ba8"/><rect x="1620.92" y="33.08" width="30.2" height="30.2" fill="#0a6ba8"/><rect x="1620.92" y="66.16" width="30.2" height="30.2" fill="#0a6ba8"/><rect x="1620.92" y="99.24" width="30.2" height="30.2" fill="#0a6ba8"/><rect x="1620.92" y="132.32" width="30.2" height="30.2" fill="#0a6ba8"/><rect x="1620.92" y="165.40" width="30.2" height="30.2" fill="#0a6ba8"/><rect x="1620.92" y="198.48" width="30.2" height="30.2" fill="#0a6ba8"/><rect x="1654.00" y="0.00" width="30.2" height="30.2" fill="#0a6ba8"/><rect x="1654.00" y="33.08" width="30.2" height="30.2" fill="#0a6ba8"/><rect x="1654.00" y="66.16" width="30.2" height="30.2" fill="#0a6ba8"/><rect x="1654.00" y="99.24" width="30.2" height="30.2" fill="#0a6ba8"/><rect x="1654.00" y="132.32" width="30.2" height="30.2" fill="#0a6ba8"/><rect x="1654.00" y="165.40" width="30.2" height="30.2" fill="#0a6ba8"/><rect x="1654.00" y="198.48" width="30.2" height="30.2" fill="#0a6ba8"/><rect x="1687.08" y="0.00" width="30.2" height="30.2" fill="#0a6ba8"/><rect x="1687.08" y="33.08" width="30.2" height="30.2" fill="#0a6ba8"/><rect x="1687.08" y="66.16" width="30.2" height="30.2" fill="#0a6ba8"/><rect x="1687.08" y="99.24" width="30.2" height="30.2" fill="#0a6ba8"/><rect x="1687.08" y="132.32" width="30.2" height="30.2" fill="#0a6ba8"/><rect x="1687.08" y="165.40" width="30.2" height="30.2" fill="#0a6ba8"/><rect x="1687.08" y="198.48" width="30.2" height="30.2" fill="#0a6ba8"/><rect x="1720.16" y="0.00" width="30.2" height="30.2" fill="#0a6ba8"/><rect x="1720.16" y="33.08" width="30.2" height="30.2" fill="#0a6ba8"/><rect x="1720.16" y="66.16" width="30.2" height="30.2" fill="#0a6ba8"/></svg>
<div style="position:absolute;left:55.3px;top:788.3px;width:100px;height:15.4px;text-align:center;font-size:15.4px;line-height:15.4px;color:#333;transform:rotate(-90deg)">2024</div>
<div style="position:absolute;left:84px;top:921.5px;width:15.4px;height:15.4px;background:#8cd3f5"></div>
<div style="position:absolute;left:171.2px;top:921.5px;width:15.4px;height:15.4px;background:#3aa6ec"></div>
<div style="position:absolute;left:278.8px;top:921.5px;width:15.4px;height:15.4px;background:#0588cb"></div>
<div style="position:absolute;left:415.7px;top:921.5px;width:15.4px;height:15.4px;background:#0a6ba8"></div>
</body></html>
